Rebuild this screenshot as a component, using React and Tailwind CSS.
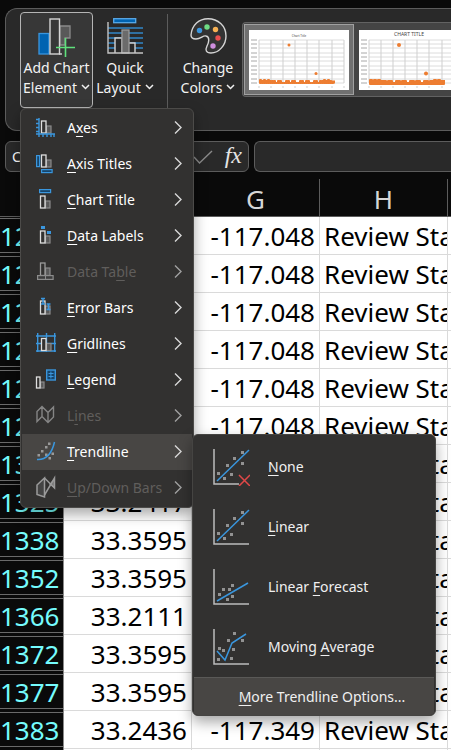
import React from "react";

const uiFont = "font-['Noto_Sans','Open_Sans',sans-serif]";

const rows = [
  ["1208", "33.2417", "-117.048"],
  ["1215", "33.2417", "-117.048"],
  ["1227", "33.2417", "-117.048"],
  ["1239", "33.2417", "-117.048"],
  ["1254", "33.2417", "-117.048"],
  ["1281", "33.2417", "-117.048"],
  ["1310", "33.2417", "-117.048"],
  ["1325", "33.2417", "-117.048"],
  ["1338", "33.3595", "-117.048"],
  ["1352", "33.3595", "-117.048"],
  ["1366", "33.2111", "-117.048"],
  ["1372", "33.3595", "-117.048"],
  ["1377", "33.3595", "-117.048"],
  ["1383", "33.2436", "-117.349"],
  ["1390", "33.2436", "-117.349"],
];

const BLUE = "#3a96dd";

function Bars({ x = 4, y = 5, h = 13, w = 5, drop = 5, dim = false }) {
  return (
    <>
      <rect x={x + w + 0.5} y={y + drop} width={w - 0.5} height={h - drop} fill="#595959" stroke="#8a8a8a" strokeWidth="1.2" />
      <rect x={x + 0.5} y={y} width={w - 0.5} height={h} fill="#323130" stroke={dim ? "#9a9a9a" : "#dedede"} strokeWidth="1.3" />
    </>
  );
}

const icons = {
  axes: (
    <>
      <Bars x={5} y={3} h={12} />
      <path d="M3 0v19M0 1.5h3M0 5.5h3M0 9.5h3M0 13.5h3M0 16h19M7 16v3M11 16v3M15 16v3M18 16v3" stroke={BLUE} strokeWidth="1.4" fill="none" />
    </>
  ),
  axisTitles: (
    <>
      <Bars x={5} y={1} h={12} />
      <rect x="0.6" y="1.6" width="3" height="11" fill="#17456b" stroke={BLUE} strokeWidth="1.2" />
      <rect x="5.6" y="15.6" width="10.5" height="3" fill="#17456b" stroke={BLUE} strokeWidth="1.2" />
    </>
  ),
  chartTitle: (
    <>
      <rect x="3.6" y="-0.4" width="11" height="3" fill="#17456b" stroke={BLUE} strokeWidth="1.2" />
      <Bars y={6} h={12} />
    </>
  ),
  dataLabels: (
    <>
      <Bars y={5} h={12} />
      <path d="M5 0h4v3H5zM11 5h4v3h-4z" fill={BLUE} />
    </>
  ),
  dataTable: (
    <>
      <Bars y={1} h={12.5} dim />
      <rect x="1.6" y="13.6" width="15.5" height="3.8" fill="#3c3c3c" stroke="#8c8c8c" strokeWidth="1.2" />
      <path d="M9.5 13v4" stroke="#8c8c8c" />
    </>
  ),
  errorBars: (
    <>
      <Bars y={3} h={13} />
      <path d="M5 .6h4M7 .6v6M5 6h4M10.5 6h4M12.5 6v6M10.5 11.5h4" stroke={BLUE} strokeWidth="1.5" />
    </>
  ),
  gridlines: (
    <>
      <path d="M1.7-1v19M10.5-1v19M18.7-1v19M0 2h20M0 9.5h20M0 17h20" stroke={BLUE} strokeWidth="1.4" />
      <Bars x={5} y={4.5} h={12} />
    </>
  ),
  legend: (
    <>
      <Bars x={0} y={7} h={11} w={4} />
      <rect x="10.7" y="0" width="8.6" height="10" fill="#17456b" stroke={BLUE} strokeWidth="1.4" />
      <path d="M12.5 3.5h5M12.5 6.5h5M14.9 1.5v7" stroke={BLUE} />
    </>
  ),
  lines: (
    <path d="M1 5.500 6 .5l6 6 5.500-5.500v10L12 16.500l-6-6-5 5zM6 .5v10M12 6.500v10" fill="none" stroke="#858585" strokeWidth="1.400" />
  ),
  trendline: (
    <>
      <path d="M5 8h2.500v2.500H5zM1.500 12H4v2.500H1.500zM9 4h2.500v2.500H9zM12 .500h2.500V3H12zM9 11.500h2.500V14H9zM12.500 15H15v2.500h-2.500zM15.500 10.500H18V13h-2.500z" fill="#999" />
      <path d="M1 17.500C10 18 16 11 18.500 0" fill="none" stroke={BLUE} strokeWidth="1.5" />
    </>
  ),
  upDown: (
    <>
      <path d="M1 7 8.500 0v19L1 16.500z" fill="#444" stroke="#9a9a9a" strokeWidth="1.500" />
      <path d="M13 6.500 18.500 0v10z" fill="#777" />
      <path d="M8.500 0 18.500 10V0l-10 17" fill="none" stroke="#9a9a9a" strokeWidth="1.500" />
    </>
  ),
};

const menu = [
  { icon: "axes", pre: "A", key: "x", post: "es" },
  { icon: "axisTitles", pre: "", key: "A", post: "xis Titles" },
  { icon: "chartTitle", pre: "", key: "C", post: "hart Title" },
  { icon: "dataLabels", pre: "", key: "D", post: "ata Labels" },
  { icon: "dataTable", pre: "Data Ta", key: "b", post: "le", disabled: true },
  { icon: "errorBars", pre: "", key: "E", post: "rror Bars" },
  { icon: "gridlines", pre: "", key: "G", post: "ridlines" },
  { icon: "legend", pre: "", key: "L", post: "egend" },
  { icon: "lines", pre: "L", key: "i", post: "nes", disabled: true },
  { icon: "trendline", pre: "", key: "T", post: "rendline", open: true },
  { icon: "upDown", pre: "", key: "U", post: "p/Down Bars", disabled: true },
];

const diagonalDots = [[5, 24], [11, 29], [14, 16], [18, 25], [21, 9], [29, 3], [29, 14]];
const trendlines = [
  { pre: "", key: "N", post: "one", dots: diagonalDots, line: "M4 32 36 1", none: true },
  { pre: "", key: "L", post: "inear", dots: diagonalDots, line: "M4 32 36 1" },
  { pre: "Linear ", key: "F", post: "orecast", dots: [[6, 25], [10, 20], [16, 20], [19, 16], [19, 27], [14, 30]], line: "M4 32 35 14" },
  { pre: "Moving ", key: "A", post: "verage", dots: [[5, 30], [6, 19], [10, 21], [15, 11], [21, 4], [29, 11], [20, 20], [18, 29]], line: "M4 22l8 9 7-17 14-9" },
];

function Label({ pre, keyChar, post }) {
  return (
    <span className="whitespace-pre">
      {pre}
      <span className="underline decoration-1 underline-offset-3">{keyChar}</span>
      {post}
    </span>
  );
}

function Caret() {
  return (
    <svg width="9" height="6" viewBox="0 0 9 6" className="mb-1 ml-1 inline-block align-middle" aria-hidden="true">
      <path d="M1 1l3.500 3.500L8 1" fill="none" stroke="#f0f0f0" strokeWidth="1.500" />
    </svg>
  );
}

function Submenu() {
  return (
    <div role="menu" className="absolute left-full top-[325px] z-20 -ml-px w-[244px] overflow-hidden rounded-md border border-[#454442] bg-[#323130] pt-0.5 text-[#f0f0f0] shadow-[0_6px_14px_rgba(0,0,0,0.35)]">
      {trendlines.map((t) => (
        <button key={t.pre + t.key} type="button" role="menuitem" className="flex h-[60px] w-full items-center gap-[18px] pl-5">
          <svg width="37" height="37" viewBox="0 0 37 37" aria-hidden="true">
            <path d={t.none ? "M1 0v35h25" : "M1 0v35h35"} fill="none" stroke="#bcbcbc" strokeWidth="1.5" />
            {t.dots.map(([x, y]) => (
              <rect key={`${x}-${y}`} x={x - 1} y={y - 1} width="3" height="3" fill="#929292" />
            ))}
            <path d={t.line} fill="none" stroke={BLUE} strokeWidth="1.5" />
            {t.none && <path d="M26 26l11 11M37 26 26 37" stroke="#e04848" strokeWidth="1.5" />}
          </svg>
          <Label pre={t.pre} keyChar={t.key} post={t.post} />
        </button>
      ))}
      <button type="button" role="menuitem" className="mx-px flex h-[38px] w-[240px] items-center justify-center border-t border-[#5a5957] bg-[#484644] pl-4">
        <Label pre="" keyChar="M" post="ore Trendline Options..." />
      </button>
    </div>
  );
}

function ElementMenu() {
  return (
    <div className="absolute -left-px top-full z-10 mt-px w-[174px] rounded-md border border-[#4c4b49] bg-[#323130] p-px text-sm text-white shadow-[0_6px_14px_rgba(0,0,0,0.35)]">
      <div role="menu">
        {menu.map((m) => (
          <button
            key={m.icon}
            type="button"
            role="menuitem"
            disabled={m.disabled}
            className={`flex h-9 w-full items-center pl-3.5 pr-2.5 ${m.open ? "bg-[#484644]" : ""} ${m.disabled ? "text-[#605e5c]" : ""}`}
          >
            <svg width="20" height="20" viewBox="0 0 20 20" className="mr-[11px] shrink-0 overflow-visible" aria-hidden="true">
              {icons[m.icon]}
            </svg>
            <Label pre={m.pre} keyChar={m.key} post={m.post} />
            <svg width="8" height="14" viewBox="0 0 8 14" className="ml-auto shrink-0" aria-hidden="true">
              <path d="M1 .5 7 6.500 1 12.500" fill="none" stroke={m.disabled ? "#a0a0a0" : "#d8d8d8"} strokeWidth="1.400" />
            </svg>
          </button>
        ))}
      </div>
      <Submenu />
    </div>
  );
}

function Thumb({ bold, title }) {
  const s = bold ? 4 : 3;
  const cells = Array.from({ length: 37 }, (_, i) => {
    const cluster = i < 6 || (i > 30 && i < 35);
    const raised = cluster ? 3 - (i % 2) : (i * 5) % 7 < 4 ? 2 : 0;
    return [10 + i * 2, raised];
  });
  return (
    <svg width="100" height="60" viewBox="0 0 100 60" className="shrink-0 bg-white" role="img" aria-label={title}>
      <text x="50" y={bold ? 6 : 7} textAnchor="middle" fontSize={bold ? 5 : 3} fill="#444" fontFamily="Noto Sans, sans-serif">{title}</text>
      {[10, 14, 18, 23, 27, 31, 36, 40, 44, 49, 53].map((y) => (
        <path key={y} d={`M10 ${y}h85`} stroke="#dcdcdc" />
      ))}
      {[10, 14, 18, 23, 27, 31, 36, 40, 44, 49, 53].map((y) => (
        <path key={y} d={`M2 ${y}h6`} stroke="#a8a8a8" />
      ))}
      {[10, 22, 34, 46, 58, 70, 83, 95].map((x) => (
        <path key={x} d={`M${x} 10v43M${x - 1} 57h2`} stroke="#cfcfcf" />
      ))}
      {cells.map(([x, up]) => (
        <rect key={x} x={x} y={52 - up} width={s} height={s + up - 1} rx="1" fill="#ed7d31" />
      ))}
      <path d="M76 52h10" stroke="#ed7d31" strokeWidth={s} />
      <circle cx="40" cy="15" r={s / 2} fill="#ed7d31" />
      <circle cx="67" cy="43.500" r={s / 2} fill="#ed7d31" />
    </svg>
  );
}

function Ribbon() {
  return (
    <section aria-label="Chart Design" className="ml-[5px] flex h-[123px] rounded-l-xl border border-r-0 border-[#5c5c5c] bg-[#292929] pl-3.5 pt-[3px] text-sm leading-5 text-[#f3f3f3]">
      <div className="relative h-24 w-[73px] shrink-0 rounded border border-[#b5b5b5] bg-[#373737]">
        <button type="button" className="flex w-full flex-col items-center whitespace-nowrap pt-[5px]">
          <svg width="38" height="40" viewBox="0 0 38 40" aria-hidden="true">
            <rect x="1" y="15.500" width="10" height="20.500" fill="#0063b1" stroke={BLUE} strokeWidth="1.300" />
            <path d="M22 8h10v12h-5v7h-5z" fill="#595959" stroke="#8a8a8a" strokeWidth="1.300" />
            <rect x="12" y="1" width="9.500" height="35" fill="#373737" stroke="#d4d4d4" strokeWidth="1.400" />
            <path d="M21 36h3" stroke="#d4d4d4" strokeWidth="1.400" />
            <path d="M27.500 20v19M18 29.500h19" stroke="#5fe07c" strokeWidth="1.600" />
          </svg>
          <span>Add Chart</span>
          <span>Element<Caret /></span>
        </button>
        <ElementMenu />
      </div>
      <button type="button" className="flex h-24 w-16 shrink-0 flex-col items-center whitespace-nowrap pt-1.5">
        <svg width="36" height="40" viewBox="0 0 36 40" aria-hidden="true">
          <rect x="6.700" y="0.700" width="22" height="4" fill="#0063b1" stroke="#5aaae8" strokeWidth="1.300" />
          <path d="M1 10h35M1 15h35M1 20h35M1 25h35M1 30h35" stroke="#3286c8" strokeWidth="1.600" />
          <path d="M8 35V20h7V35M21 35V25h7V35" fill="#292929" stroke="#d4d4d4" strokeWidth="1.400" />
          <rect x="15" y="12" width="7" height="23" fill="#6b6b6b" stroke="#9a9a9a" strokeWidth="1.300" />
          <path d="M1 4v31h35" fill="none" stroke="#c4c4c4" strokeWidth="1.400" />
        </svg>
        <span>Quick</span>
        <span>Layout<Caret /></span>
      </button>
      <div className="ml-[10px] mt-0.5 h-[94px] w-px shrink-0 bg-[#5c5c5c]" />
      <button type="button" className="ml-2 flex h-24 w-16 shrink-0 flex-col items-center whitespace-nowrap pt-1.5">
        <svg width="38" height="40" viewBox="0 0 38 40" aria-hidden="true">
          <path d="M2 17C3 7 10 .7 19 .7c10 0 18 7.300 18 17.300 0 9-7 17-15 17-5 0-6-3-4-7 2-4 3-9-1-10-3-1-5 3-10 3-3 0-5-1-5-4z" fill="#333" stroke="#d4d4d4" strokeWidth="1.400" />
          <circle cx="10.500" cy="12.500" r="2.700" fill={BLUE} />
          <circle cx="18" cy="9" r="2.700" fill="#6fdc84" />
          <circle cx="26.500" cy="11.500" r="2.700" fill="#f7b155" />
          <circle cx="29" cy="20" r="2.700" fill="#e84f4f" />
          <circle cx="24" cy="28" r="2.700" fill="#cf8ede" />
        </svg>
        <span>Change</span>
        <span>Colors<Caret /></span>
      </button>
      <div className="ml-0.5 mt-2.5 flex h-[75px] min-w-0 flex-1 gap-[5px] overflow-hidden rounded-l border border-r-0 border-[#626262] bg-[#444] py-px pl-px">
        <button type="button" className="h-[71px] w-[110px] shrink-0 border border-[#a0a0a0] bg-[#707070] px-1">
          <Thumb title="Chart Title" />
        </button>
        <button type="button" className="h-[71px] shrink-0">
          <Thumb title="CHART TITLE" bold />
        </button>
      </div>
    </section>
  );
}

function FormulaBar() {
  return (
    <div className="mt-2.5 flex h-[31px] gap-[5px] pl-[5px] text-sm">
      <input aria-label="Name box" defaultValue="Chart 1" className="h-full w-[120px] rounded-md border border-[#5c5c5c] bg-[#292929] pl-1.5 text-white outline-none" />
      <div className="flex w-[119px] items-center justify-end rounded-md border border-[#5c5c5c] bg-[#292929] pr-1.5">
        <button type="button" aria-label="Enter" className="mr-3">
          <svg width="20" height="14" viewBox="0 0 20 14" aria-hidden="true">
            <path d="M1 7l5.500 6L19 1" fill="none" stroke="#8a8a8a" strokeWidth="1.400" />
          </svg>
        </button>
        <button type="button" aria-label="Insert function" className="pb-1 font-['Liberation_Serif',serif] text-2xl italic leading-6 text-[#e4e4e4]">fx</button>
      </div>
      <input aria-label="Formula" className="h-full min-w-0 flex-1 rounded-l-md border border-r-0 border-[#5c5c5c] bg-[#292929] px-2 text-white outline-none" />
    </div>
  );
}

function Sheet() {
  return (
    <div className="mt-[7px] overflow-hidden">
      <table className="w-[576px] table-fixed border-separate border-spacing-0 text-[26px] leading-8 text-black">
        <colgroup>
          <col className="w-16" />
          <col className="w-32" />
          <col className="w-32" />
          <col className="w-32" />
          <col className="w-32" />
        </colgroup>
        <thead>
          <tr className="h-[38px] text-[#d6d6d6]">
            <th className="border-b border-r border-[#5c5c5c] p-0" />
            {["F", "G", "H", "I"].map((c) => (
              <th key={c} scope="col" className="border-b border-r border-[#5c5c5c] p-0 pt-0.5 font-normal">{c}</th>
            ))}
          </tr>
        </thead>
        <tbody>
          {rows.map(([n, lat, lng]) => (
            <tr key={n} className="h-[38px] bg-white">
              <th scope="row" className="border-r border-[#8a8a8a] bg-[#0a0a0a] p-0 pb-0.5 pt-px text-left font-normal text-[#75fbfd]">
                <div className="flex h-[35px] items-center border-y border-[#6a6a6a]">{n}</div>
              </th>
              <td className="border-b border-r border-[#dadada] p-0 pr-1 text-right">{lat}</td>
              <td className="border-b border-r border-[#dadada] p-0 pr-1 text-right">{lng}</td>
              <td className="border-b border-r border-[#dadada] p-0 pl-1">
                <div className="overflow-hidden whitespace-nowrap">Review Status</div>
              </td>
              <td className="border-b border-r border-[#dadada] p-0" />
            </tr>
          ))}
        </tbody>
      </table>
    </div>
  );
}

export default function App() {
  return (
    <main className={`h-screen overflow-hidden bg-[#0a0a0a] pt-2 ${uiFont}`}>
      <Ribbon />
      <FormulaBar />
      <Sheet />
    </main>
  );
}
